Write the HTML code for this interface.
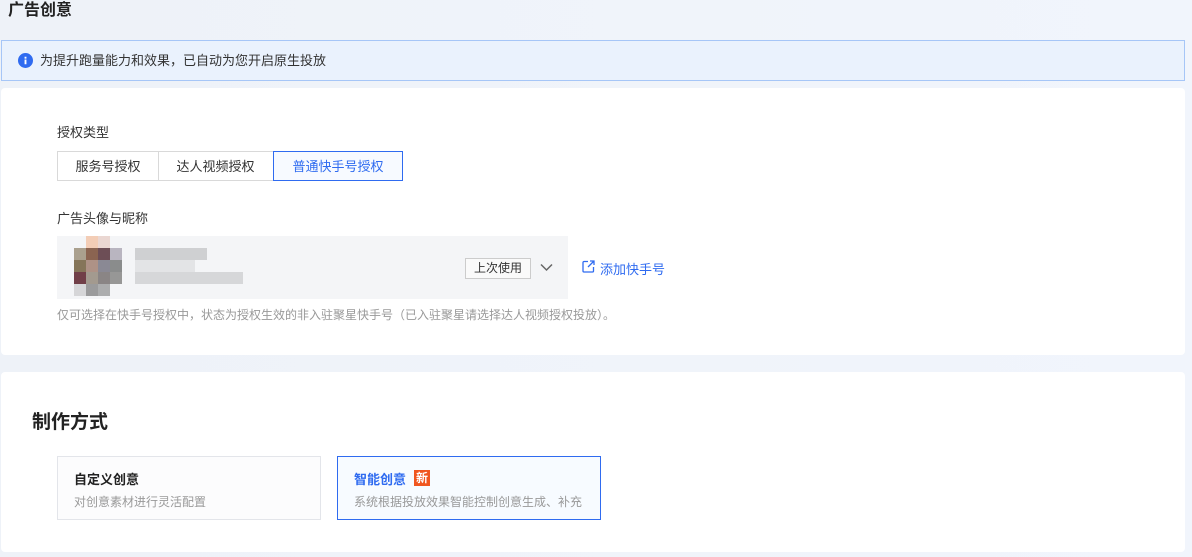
<!DOCTYPE html><html><head><meta charset="utf-8"><style>
body{margin:0;width:1192px;height:557px;overflow:hidden;background:linear-gradient(90deg,#eef2f8,#f1f5fc);font-family:"Liberation Sans","Noto Sans CJK SC",sans-serif;position:relative}
.a{position:absolute}
.t{font-size:16px;font-weight:bold;color:#222;left:8px;top:0px;line-height:22px}
.ban{left:1px;top:40px;width:1182px;height:39px;background:#eaf2fd;border:1px solid #a6c6f7;font-size:13px;color:#333;line-height:39px}
.card{background:#fff;border-radius:4px}
.seg{top:151px;height:30px;border:1px solid #d9d9d9;font-size:13px;line-height:30px;text-align:center;color:#333;box-sizing:border-box}
.box{top:456px;width:264px;height:64px;box-sizing:border-box;border:1px solid #e3e5ea;background:#fcfcfd}
.box b{position:absolute;left:16px;top:12px;font-size:13px}
.box span{position:absolute;left:16px;top:36px;font-size:12px;color:#999}
.p{position:absolute;width:12px;height:12px}
</style></head><body>
<div class="a t">广告创意</div>
<div class="a ban"><svg class="a" style="left:16px;top:12px" width="15" height="15" viewBox="0 0 16 16"><circle cx="8" cy="8" r="8" fill="#2f6bf0"/><rect x="7" y="7" width="2" height="5" fill="#fff"/><rect x="7" y="4" width="2" height="2" fill="#fff"/></svg><span class="a" style="left:38px">为提升跑量能力和效果，已自动为您开启原生投放</span></div>
<div class="a card" style="left:1px;top:88px;width:1184px;height:267px"></div>
<div class="a" style="left:57px;top:122px;font-size:13px;color:#333">授权类型</div>
<div class="a seg" style="left:57px;width:102px">服务号授权</div>
<div class="a seg" style="left:158px;width:116px;border-left:none">达人视频授权</div>
<div class="a seg" style="left:273px;width:130px;border-color:#2f6bf0;color:#2f6bf0;background:#f7faff">普通快手号授权</div>
<div class="a" style="left:57px;top:208px;font-size:13px;color:#333">广告头像与昵称</div>
<div class="a" style="left:57px;top:236px;width:511px;height:63px;background:#f4f5f7"></div>
<div class="p" style="left:86px;top:236px;background:#f3cdb6"></div><div class="p" style="left:98px;top:236px;background:#ead7d2"></div>
<div class="p" style="left:74px;top:248px;background:#aaa08e"></div><div class="p" style="left:86px;top:248px;background:#8b6451"></div><div class="p" style="left:98px;top:248px;background:#6d4e56"></div><div class="p" style="left:110px;top:248px;background:#b9b5c0"></div>
<div class="p" style="left:74px;top:260px;background:#857559"></div><div class="p" style="left:86px;top:260px;background:#ae9286"></div><div class="p" style="left:98px;top:260px;background:#8a8994"></div><div class="p" style="left:110px;top:260px;background:#8a8c8c"></div>
<div class="p" style="left:74px;top:272px;background:#713f48"></div><div class="p" style="left:86px;top:272px;background:#a39a8f"></div><div class="p" style="left:98px;top:272px;background:#8a8585"></div><div class="p" style="left:110px;top:272px;background:#979796"></div>
<div class="p" style="left:74px;top:284px;background:#d6d6d8"></div><div class="p" style="left:86px;top:284px;background:#9b9b9c"></div><div class="p" style="left:98px;top:284px;background:#acadae"></div>
<div class="a" style="left:135px;top:248px;width:72px;height:12px;background:#cfd0d2"></div>
<div class="a" style="left:135px;top:260px;width:60px;height:12px;background:#e3e4e6"></div>
<div class="a" style="left:135px;top:272px;width:108px;height:12px;background:#d6d7d9"></div>
<div class="a" style="left:465px;top:258px;width:64px;height:19px;border:1px solid #ccc;background:#fafafa;font-size:12px;line-height:19px;text-align:center;color:#333">上次使用</div>
<svg class="a" style="left:540px;top:263px" width="13" height="9" viewBox="0 0 13 9"><path d="M1 1.5L6.5 7L12 1.5" fill="none" stroke="#666" stroke-width="1.5"/></svg>
<svg class="a" style="left:582px;top:260px" width="13" height="13" viewBox="0 0 13 13"><path d="M6 1.5H2a1 1 0 0 0-1 1v8.5a1 1 0 0 0 1 1h8.5a1 1 0 0 0 1-1V7M8 1h4v4M12 1L6 7" fill="none" stroke="#2f6bf0" stroke-width="1.3"/></svg>
<div class="a" style="left:600px;top:259px;font-size:13px;color:#2f6bf0">添加快手号</div>
<div class="a" style="left:57px;top:306px;font-size:12px;color:#999">仅可选择在快手号授权中，状态为授权生效的非入驻聚星快手号（已入驻聚星请选择达人视频授权投放）。</div>
<div class="a card" style="left:1px;top:372px;width:1184px;height:180px"></div>
<div class="a" style="left:32px;top:407px;font-size:19px;font-weight:bold;color:#222">制作方式</div>
<div class="a box" style="left:57px"><b style="color:#222">自定义创意</b><span>对创意素材进行灵活配置</span></div>
<div class="a box" style="left:337px;border-color:#2f6bf0;background:#f7fbff"><b style="color:#2f6bf0">智能创意</b><div class="a" style="left:76px;top:13px;width:16px;height:16px;background:#f0561f;color:#fff;font-size:12px;font-weight:bold;line-height:16px;text-align:center">新</div><span>系统根据投放效果智能控制创意生成、补充</span></div>
</body></html>
